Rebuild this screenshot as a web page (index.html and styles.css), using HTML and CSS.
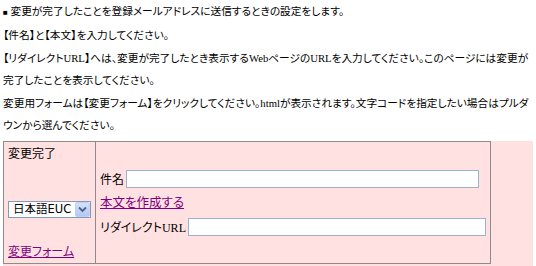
FILE: index.html
```html
<!DOCTYPE html>
<html lang="ja">
<head>
<meta charset="utf-8">
<title>変更完了</title>
<link rel="stylesheet" href="styles.css">
</head>
<body>
<div class="intro">
<p><span class="mark">■</span> 変更が完了したことを登録メールアドレスに送信するときの設定をします。</p>
<p>【件名】と【本文】を入力してください。</p>
<p>【リダイレクトURL】へは、変更が完了したとき表示するWebページのURLを入力してください。このページには変更が完了したことを表示してください。</p>
<p>変更用フォームは【変更フォーム】をクリックしてください。htmlが表示されます。文字コードを指定したい場合はプルダウンから選んでください。</p>
</div>
<div class="panel">
<table class="settings">
<tr>
<td class="side">
<div class="side-inner">
<span class="title">変更完了</span>
<span class="picker">
<select class="charset"><option>日本語EUC</option><option>Shift_JIS</option><option>UTF-8</option></select>
<span class="arrow"><svg width="9" height="7" viewBox="0 0 9 7"><path d="M1 1.5 L4.5 5 L8 1.5" fill="none" stroke="#4d6185" stroke-width="1.8"/></svg></span>
</span>
<a class="link" href="#">変更フォーム</a>
</div>
</td>
<td class="main">
<div class="row"><span class="label">件名</span><input class="field subject" type="text"></div>
<div class="row"><a class="link big" href="#">本文を作成する</a></div>
<div class="row"><span class="label">リダイレクトURL</span><input class="field redirect" type="text"></div>
</td>
</tr>
</table>
</div>
</body>
</html>
```
FILE: styles.css
```css
html, body {
  margin: 0;
  padding: 0;
  background: #ffffff;
}
body {
  padding: 0 3px;
  font-family: "Liberation Serif", "Noto Sans CJK JP", serif;
  font-feature-settings: "palt";
  color: #000;
  width: 530px;
}
.intro {
  font-size: 10.7px;
  line-height: 22.4px;
}
.intro p {
  margin: 0;
}
.mark {
  font-size: 8px;
}
.panel {
  margin-top: 5px;
  background: #ffe1e1;
  height: 126px;
}
.settings {
  border-collapse: collapse;
  width: 487px;
  height: 123px;
  font-size: 12px;
}
.settings td {
  border: 1px solid #8c8c8c;
  padding: 0;
}
.side {
  width: 92px;
  vertical-align: top;
}
.side-inner {
  display: flex;
  flex-direction: column;
  align-items: flex-start;
  padding: 5px 4px 4px 4px;
  height: 112px;
  justify-content: space-between;
}
.title {
  line-height: 14px;
}
.picker {
  display: inline-flex;
  align-items: center;
  background: #fff;
  border: 1px solid #7f9db9;
  height: 17px;
  width: 83px;
  margin-top: 12px;
  box-sizing: border-box;
}
.charset {
  appearance: none;
  -webkit-appearance: none;
  border: 0;
  background: transparent;
  font-family: "DejaVu Sans", "Noto Sans CJK JP", sans-serif;
  font-size: 11.5px;
  padding: 0 0 0 4px;
  margin: 0;
  flex: 1;
  width: 64px;
  height: 15px;
  line-height: 15px;
  color: #000;
}
.arrow {
  width: 15px;
  height: 15px;
  background: linear-gradient(#d4e0fc, #b3c7f5);
  border: 1px solid #c0cff3;
  border-radius: 2px;
  box-sizing: border-box;
  display: flex;
  align-items: center;
  justify-content: center;
}
.link {
  color: #800080;
  text-decoration: underline;
  line-height: 14px;
}
.big {
  font-size: 12.5px;
}
.main {
  vertical-align: middle;
  padding: 0 4px !important;
}
.row {
  display: flex;
  align-items: center;
  height: 24px;
}
.label {
  white-space: nowrap;
  flex-shrink: 0;
}
.field {
  border: 1px solid #9db0cc;
  background: #fff;
  height: 18px;
  box-sizing: border-box;
  margin: 0 0 0 2px;
  padding: 0;
  flex-shrink: 0;
}
.subject {
  width: 353px;
}
.redirect {
  width: 298px;
}
```
